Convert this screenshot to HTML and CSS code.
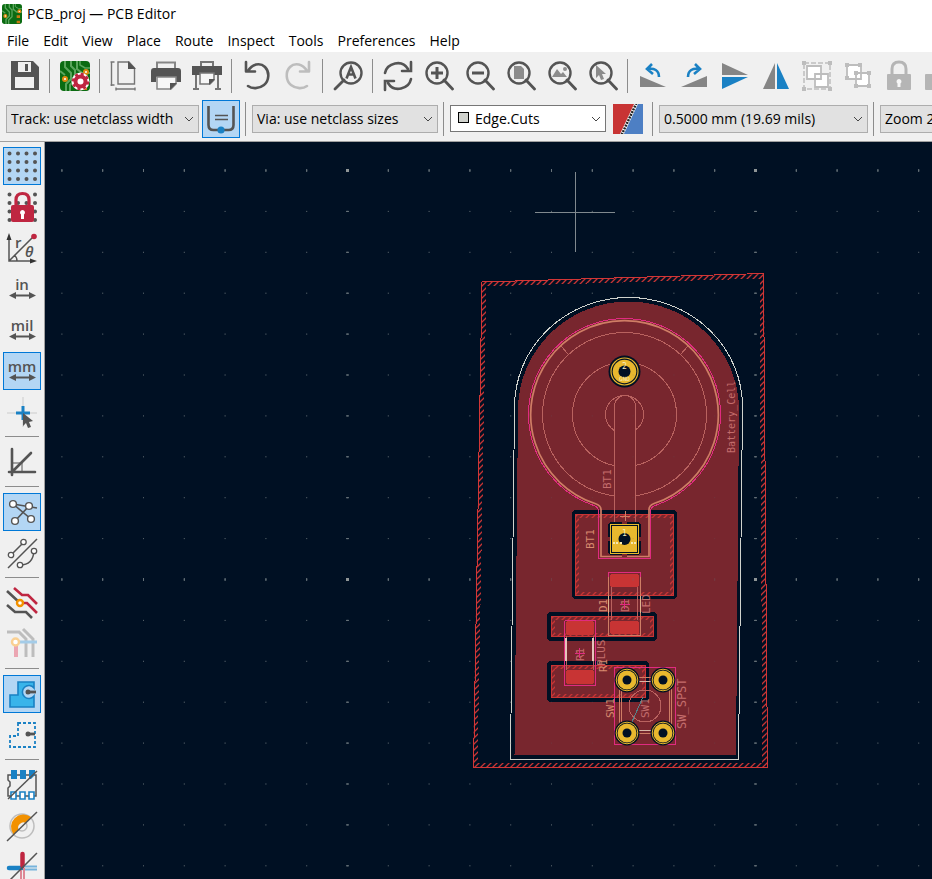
FILE: index.html
```html
<!DOCTYPE html>
<html lang="en">
<head>
<meta charset="utf-8">
<meta name="viewport" content="width=device-width, initial-scale=1">
<title>PCB_proj — PCB Editor</title>
<link rel="stylesheet" href="styles.css">
</head>
<body>
<svg class="defs" aria-hidden="true">
  <symbol id="board" viewBox="0 0 30 30">
    <rect x="0" y="0" width="30" height="30" rx="4" fill="#0b6b12"/>
    <path d="M5 0v6l6 6v6l-5 5v7M11 0v5l4 4v10l-5 5v6M17 0v8l5 4h8M0 10l5 4" fill="none" stroke="#5aa55c" stroke-width="2"/>
    <path d="M20 0v4l5 3h5" fill="none" stroke="#5aa55c" stroke-width="1.500"/>
    <g fill="#fff" stroke="#e08a10" stroke-width="2"><circle cx="5" cy="18" r="2"/><circle cx="26" cy="11" r="2"/></g>
    <path d="M22 17h5v4h-5zM22 25h5v4h-5z" fill="#c77a10"/>
  </symbol>
  <symbol id="lens" viewBox="0 0 30 30">
    <circle cx="13" cy="12" r="10.500" fill="none" stroke="#545454" stroke-width="2.400"/>
    <path d="M20 19l8.500 9" stroke="#545454" stroke-width="2.800" stroke-linecap="round"/>
  </symbol>
  <symbol id="units" viewBox="0 0 30 30">
    <path d="M6 21.500h19" stroke="#545454" stroke-width="2"/>
    <path d="M2 21.500l7-3.500v7zM29 21.500l-7-3.500v7z" fill="#545454"/>
  </symbol>
</svg>

<header class="titlebar">
  <svg class="app-icon" aria-hidden="true"><use href="#board"/></svg>
  <h1>PCB_proj — PCB Editor</h1>
</header>
<nav class="menubar" aria-label="Main menu">
  <button>File</button><button>Edit</button><button>View</button><button>Place</button><button>Route</button><button>Inspect</button><button>Tools</button><button>Preferences</button><button>Help</button>
</nav>

<div class="toolbar" role="toolbar" aria-label="Main">
  <button class="tool" aria-label="Save"><svg viewBox="0 0 30 30"><path fill="#545454" fill-rule="evenodd" d="M1 0h22l6 6v23H1zM8 1v10h13V1zM5 16v11h19V16z"/><path fill="#545454" d="M15 3h3v7h-3z"/></svg></button>
  <span class="sep"></span>
  <button class="tool" aria-label="Board setup"><svg viewBox="0 0 30 30"><use href="#board"/><circle cx="20.500" cy="20.500" r="9" fill="#fff"/><circle cx="20.500" cy="20.500" r="5" fill="none" stroke="#bf2641" stroke-width="4"/><circle cx="20.500" cy="20.500" r="7.500" fill="none" stroke="#bf2641" stroke-width="2.500" stroke-dasharray="3 2.890"/></svg></button>
  <span class="sep"></span>
  <button class="tool" aria-label="Page settings"><svg viewBox="0 0 30 30"><path d="M8 1h11l5.500 6v16H8zM1.500 1v24M.5 1h4M.5 24h4M6 28h19M6 26.500v3M25 26.500v3" fill="none" stroke="#757575" stroke-width="1.400"/><path d="M18 0l8 8h-8z" fill="#545454"/></svg></button>
  <button class="tool" aria-label="Print"><svg viewBox="0 0 30 30"><path d="M6 7V1.500h18V7" fill="none" stroke="#858585" stroke-width="2"/><path d="M0 10q0-3 3-3h24q3 0 3 3v11h-5v-5H5v5H0z" fill="#545454"/><path d="M6 16h19v7l-5 5H6z" fill="#f7f7f7" stroke="#858585" stroke-width="1.500"/><path d="M19 29v-7h7z" fill="#545454"/></svg></button>
  <button class="tool" aria-label="Plot"><svg viewBox="0 0 30 30"><path d="M9 6V1h12v5" fill="none" stroke="#757575" stroke-width="2"/><path d="M0 5h30v9h-8v-2H8v2H0z" fill="#545454"/><path d="M8 12h14v7l-4 4H8z" fill="#f7f7f7" stroke="#757575" stroke-width="1.500"/><path d="M17 24v-6h6z" fill="#545454"/><path d="M4 14v14M26 14v14M1 28h6M23 28h6" stroke="#757575" stroke-width="2"/></svg></button>
  <span class="sep"></span>
  <button class="tool" aria-label="Undo"><svg viewBox="0 0 30 30"><path d="M4 10h2C10 3 18 1 23 6s4 14-1 18-12 4-16 1M4 1v9.500h9" fill="none" stroke="#545454" stroke-width="2.600" stroke-linecap="round" stroke-linejoin="round"/></svg></button>
  <button class="tool" aria-label="Redo" disabled><svg viewBox="0 0 30 30"><path d="M26 10h-2C20 3 12 1 7 6s-4 14 1 18 12 4 16 1M26 1v9.500h-9" fill="none" stroke="#bdbdbd" stroke-width="2.600" stroke-linecap="round" stroke-linejoin="round"/></svg></button>
  <span class="sep"></span>
  <button class="tool" aria-label="Find"><svg viewBox="0 0 30 30"><circle cx="18" cy="12" r="10.500" fill="none" stroke="#545454" stroke-width="2.400"/><path d="M11 19l-9 9" stroke="#545454" stroke-width="2.800" stroke-linecap="round"/><path d="M13.500 17.500L18 6l4.500 11.500M15 13.500h6" fill="none" stroke="#545454" stroke-width="2.600"/></svg></button>
  <span class="sep"></span>
  <button class="tool" aria-label="Refresh"><svg viewBox="0 0 30 30"><path d="M2 12C4 2 19-2 25 8M28 18c-2 10-17 14-23 4M28 1v9h-9M2 29v-9h9" fill="none" stroke="#545454" stroke-width="2.600" stroke-linecap="round"/></svg></button>
  <button class="tool" aria-label="Zoom in"><svg viewBox="0 0 30 30"><use href="#lens"/><path d="M7 12h12M13 6v12" stroke="#545454" stroke-width="3"/></svg></button>
  <button class="tool" aria-label="Zoom out"><svg viewBox="0 0 30 30"><use href="#lens"/><path d="M7 12h12" stroke="#545454" stroke-width="3"/></svg></button>
  <button class="tool" aria-label="Zoom to fit"><svg viewBox="0 0 30 30"><use href="#lens"/><path d="M8 5h7l3 3v10H8z" fill="#8c8c8c"/></svg></button>
  <button class="tool" aria-label="Zoom to objects"><svg viewBox="0 0 30 30"><use href="#lens"/><path d="M5 16l5-8 4 5 2-2 4 5z" fill="#8c8c8c"/><circle cx="18" cy="8" r="2" fill="#8c8c8c"/></svg></button>
  <button class="tool" aria-label="Zoom to selection"><svg viewBox="0 0 30 30"><use href="#lens"/><path d="M8 4l10 9h-4l2 5-3 1-2-5-3 3z" fill="#8c8c8c"/></svg></button>
  <span class="sep"></span>
  <button class="tool" aria-label="Rotate counterclockwise"><svg viewBox="0 0 30 30"><path d="M2 15l26 11H2z" fill="#858585"/><path d="M21 16c0-7-5-9-11-8M14 3L9 8l6 5" fill="none" stroke="#1a81c4" stroke-width="2.600"/></svg></button>
  <button class="tool" aria-label="Rotate clockwise"><svg viewBox="0 0 30 30"><path d="M28 15L2 26h26z" fill="#858585"/><path d="M9 16c0-7 5-9 11-8M16 3l5 5-6 5" fill="none" stroke="#1a81c4" stroke-width="2.600"/></svg></button>
  <button class="tool" aria-label="Mirror vertically"><svg viewBox="0 0 30 30"><path d="M2 2l26 12H2z" fill="#858585"/><path d="M2 28l26-12H2z" fill="#1a81c4"/></svg></button>
  <button class="tool" aria-label="Mirror horizontally"><svg viewBox="0 0 30 30"><path d="M14 2v26H2z" fill="#858585"/><path d="M16 2v26h12z" fill="#1a81c4"/></svg></button>
  <button class="tool" aria-label="Group" disabled><svg viewBox="0 0 30 30"><rect x="2" y="2" width="26" height="26" fill="none" stroke="#bdbdbd" stroke-width="1.500" stroke-dasharray="5 2"/><path d="M0 0h4v4H0zM26 0h4v4h-4zM0 26h4v4H0zM26 26h4v4h-4z" fill="#bdbdbd"/><path d="M5 5h14v13H5zM13 13h13v13H13z" fill="#fff" stroke="#bdbdbd" stroke-width="1.800"/></svg></button>
  <button class="tool" aria-label="Ungroup" disabled><svg viewBox="0 0 30 30"><path d="M4 4h14v14H4zM13 12h13v13H13z" fill="#fff" stroke="#bdbdbd" stroke-width="1.800"/><path d="M2 2h4v4H2zM15 2h4v4h-4zM2 15h4v4H2zM11 10h4v4h-4zM24 10h4v4h-4zM11 23h4v4h-4zM24 23h4v4h-4z" fill="#bdbdbd"/></svg></button>
  <button class="tool" aria-label="Lock" disabled><svg viewBox="0 0 30 30"><path d="M8 14V8q0-7 7-7t7 7v6" fill="none" stroke="#b5b5b5" stroke-width="3"/><rect x="3" y="13" width="24" height="16" rx="1" fill="#b5b5b5"/><path d="M15 18a2.500 2.500 0 011.500 4.500V26h-3v-3.500A2.500 2.500 0 0115 18z" fill="#f7f7f7"/></svg></button>
  <button class="tool" aria-label="Unlock" disabled><svg viewBox="0 0 30 30"><path d="M14 14V8q0-7 7-7t7 7" fill="none" stroke="#b5b5b5" stroke-width="3"/><rect x="0" y="13" width="24" height="16" rx="1" fill="#b5b5b5"/></svg></button>
</div>

<div class="toolbar options" role="toolbar" aria-label="Options">
  <label class="combo track"><select aria-label="Track width"><option>Track: use netclass width</option></select><svg class="chevron" viewBox="0 0 10 6"><path d="M1 1l4 4 4-4"/></svg></label>
  <button class="tool on" aria-label="Use existing track width" aria-pressed="true"><svg viewBox="0 0 30 30"><path d="M2.500 2v19q0 5 5 5h15q5 0 5-5V2" fill="none" stroke="#545454" stroke-width="2.600"/><path d="M9 11.500h13M9 15.500h13" stroke="#545454" stroke-width="1.500"/><circle cx="15" cy="26" r="3.600" fill="#1a81c4"/></svg></button>
  <span class="sep"></span>
  <label class="combo via"><select aria-label="Via size"><option>Via: use netclass sizes</option></select><svg class="chevron" viewBox="0 0 10 6"><path d="M1 1l4 4 4-4"/></svg></label>
  <span class="sep"></span>
  <label class="combo layer"><span class="swatch"></span><select aria-label="Layer"><option>Edge.Cuts</option></select><svg class="chevron" viewBox="0 0 10 6"><path d="M1 1l4 4 4-4"/></svg></label>
  <button class="pair" aria-label="Layer pair"><svg viewBox="0 0 30 30"><path d="M0 0h30v30H0z" fill="#4d7fc4"/><path d="M0 0h23L9 30H0z" fill="#c83434"/><path d="M23.500-1L8.500 31" stroke="#fff" stroke-width="3.500"/><path d="M23.500-1L8.500 31" stroke="#222" stroke-width="2.500" stroke-dasharray="2 1"/></svg></button>
  <span class="sep"></span>
  <label class="combo grid"><select aria-label="Grid"><option>0.5000 mm (19.69 mils)</option></select><svg class="chevron" viewBox="0 0 10 6"><path d="M1 1l4 4 4-4"/></svg></label>
  <span class="sep"></span>
  <label class="combo zoom"><select aria-label="Zoom"><option>Zoom 2.00</option></select><svg class="chevron" viewBox="0 0 10 6"><path d="M1 1l4 4 4-4"/></svg></label>
</div>

<main class="workspace">
<div class="side" role="toolbar" aria-label="Display options">
  <button class="tool on" aria-label="Show grid" aria-pressed="true"><svg viewBox="0 0 30 30"><path d="M2.500 2.500h.01M11 2.500h.01M19.500 2.500h.01M28 2.500h.01M2.500 11h.01M11 11h.01M19.500 11h.01M28 11h.01M2.500 19.500h.01M11 19.500h.01M19.500 19.500h.01M28 19.500h.01M2.500 28h.01M11 28h.01M19.500 28h.01M28 28h.01" stroke="#545454" stroke-width="4" stroke-linecap="round"/></svg></button>
  <button class="tool" aria-label="Grid overrides"><svg viewBox="0 0 30 30"><path d="M2.500 2.500h.01M28 2.500h.01M2.500 11h.01M11 11h.01M19.500 11h.01M28 11h.01M2.500 19.500h.01M28 19.500h.01M2.500 28h.01M28 28h.01" stroke="#545454" stroke-width="4" stroke-linecap="round"/><path d="M9 15V8q0-6.500 6.500-6.500T22 8v7" fill="none" stroke="#bf2641" stroke-width="3.200"/><rect x="4" y="13" width="23" height="17" rx="2" fill="#bf2641"/><path d="M15.500 18a2.500 2.500 0 011.500 4.500V27h-3v-4.500A2.500 2.500 0 0115.500 18z" fill="#fff"/></svg></button>
  <button class="tool" aria-label="Polar coordinates"><svg viewBox="0 0 30 30"><path d="M2 4v24h24M2 28L26 4M7 22q3 2 3 6" fill="none" stroke="#545454" stroke-width="1.500"/><path d="M2 0l2.500 7h-5zM30 28l-7-2.500v5z" fill="#333"/><circle cx="27" cy="3.500" r="2.800" fill="#bf2641"/><text x="8" y="15" class="icon-text">r</text><text x="18" y="24" class="icon-text theta">θ</text></svg></button>
  <button class="tool" aria-label="Inches"><svg viewBox="0 0 30 30"><text x="15" y="16" class="icon-text mid">in</text><use href="#units"/></svg></button>
  <button class="tool" aria-label="Mils"><svg viewBox="0 0 30 30"><text x="15" y="16" class="icon-text mid">mil</text><use href="#units"/></svg></button>
  <button class="tool on" aria-label="Millimeters" aria-pressed="true"><svg viewBox="0 0 30 30"><text x="15" y="16" class="icon-text mid">mm</text><use href="#units"/></svg></button>
  <button class="tool" aria-label="Full-window crosshairs"><svg viewBox="0 0 30 30"><path d="M16 0v30M0 16h30" stroke="#ccc"/><path d="M16 9v14M9 16h14" stroke="#1a81c4" stroke-width="3"/><path d="M16 16l10 8-4 1 2 5-3 1-2-5-3 3z" fill="#545454"/></svg></button>
  <span class="sep"></span>
  <button class="tool" aria-label="45 degree mode"><svg viewBox="0 0 30 30"><path d="M5 2v26M2 25h26M5 25L24 6" stroke="#545454" stroke-width="2.600" stroke-linecap="round"/><path d="M6 16h9v9" fill="none" stroke="#545454"/></svg></button>
  <span class="sep"></span>
  <button class="tool on" aria-label="Show ratsnest" aria-pressed="true"><svg viewBox="0 0 30 30"><path d="M6 7l24 4M6 7l18 15M22 9L8 24" stroke="#545454" stroke-width="1.600"/><g fill="#fff" stroke="#545454" stroke-width="1.400"><circle cx="6" cy="7" r="3.400"/><circle cx="22" cy="9" r="3.400"/><circle cx="24" cy="22" r="3.400"/><circle cx="8" cy="24" r="3.400"/></g></svg></button>
  <button class="tool" aria-label="Curved ratsnest"><svg viewBox="0 0 30 30"><path d="M1 30L30 1M4 17L16 5M13 27q13 0 14-14" fill="none" stroke="#545454" stroke-width="1.500"/><g fill="#fff" stroke="#545454" stroke-width="1.300"><circle cx="16.500" cy="4" r="2.700"/><circle cx="4" cy="17" r="2.700"/><circle cx="27" cy="13" r="2.700"/><circle cx="13" cy="27" r="2.700"/></g></svg></button>
  <span class="sep"></span>
  <button class="tool" aria-label="Inactive layers"><svg viewBox="0 0 30 30"><path d="M0 3l13 12M0 17l8 7h11l6 6" fill="none" stroke="#545454" stroke-width="2.600"/><path d="M7 0l8 7h6l9 9M14 15h6l10 10" fill="none" stroke="#bf2641" stroke-width="2.600"/><circle cx="13" cy="15" r="3" fill="#fff" stroke="#f29100" stroke-width="2.400"/></svg></button>
  <button class="tool" aria-label="Net highlighting"><svg viewBox="0 0 30 30"><path d="M0 3h12l7 7v18M16 0l10 10v18" fill="none" stroke="#bdbdbd" stroke-width="3"/><path d="M9 14v14" stroke="#eba6b2" stroke-width="4"/><path d="M12 13h18" stroke="#a4cce8" stroke-width="3"/><circle cx="8.500" cy="13" r="3.500" fill="#fff" stroke="#fad092" stroke-width="2.400"/></svg></button>
  <span class="sep"></span>
  <button class="tool on" aria-label="Show filled zones" aria-pressed="true"><svg viewBox="0 0 30 30"><path d="M11 3h16v6a6.500 6.500 0 100 8v11H3V16h8z" fill="#39b4ea" stroke="#1a81c4" stroke-width="1.600"/><path d="M20 13h9" stroke="#545454" stroke-width="2.800"/><circle cx="21" cy="13" r="2.500" fill="#545454"/></svg></button>
  <button class="tool" aria-label="Show zone outlines"><svg viewBox="0 0 30 30"><path d="M11 3h17v24H3V16h8z" fill="none" stroke="#1a81c4" stroke-width="1.800" stroke-dasharray="3 2"/><path d="M20 14h8" stroke="#545454" stroke-width="2.800"/><circle cx="21" cy="14" r="2.500" fill="#545454"/></svg></button>
  <span class="sep"></span>
  <button class="tool" aria-label="Sketch footprints"><svg viewBox="0 0 30 30"><path d="M1 5h28v21H1v-8l2-2v-4l-2-2z" fill="none" stroke="#545454" stroke-width="1.500"/><path d="M4 0h6v9H4zM13 0h6v9h-6zM22 0h6v5l-4 4h-2z" fill="#1a81c4"/><path d="M4 22h5v7H4zM13 22h5v7h-5zM22 22h5v7h-5z" fill="#fff" stroke="#1a81c4" stroke-width="1.600"/><path d="M1 29L30 1" stroke="#545454" stroke-width="1.500"/></svg></button>
  <button class="tool" aria-label="Sketch vias"><svg viewBox="0 0 30 30"><circle cx="15" cy="15" r="12" fill="none" stroke="#bdbdbd" stroke-width="1.500"/><circle cx="15" cy="15" r="5" fill="none" stroke="#bdbdbd" stroke-width="1.500"/><path d="M6.500 23.500A12.500 12.500 0 0124 6l-5 6a5.500 5.500 0 00-7.500 7z" fill="#f29100"/><path d="M0 30L30 1" stroke="#545454" stroke-width="1.500"/></svg></button>
  <button class="tool" aria-label="Sketch tracks"><svg viewBox="0 0 30 30"><path d="M2 16h13" stroke="#1a81c4" stroke-width="4.500" stroke-linecap="round"/><path d="M15.500 2v12" stroke="#bf2641" stroke-width="4.500" stroke-linecap="round"/><path d="M14 18v12M17 16v14" stroke="#dd8795" stroke-width="2"/><path d="M18 14.500h12M18 17.500h12" stroke="#76b3dc" stroke-width="2"/><path d="M1 30L30 1" stroke="#545454" stroke-width="1.500"/></svg></button>
</div>

<svg class="board" viewBox="45 142 887 737" preserveAspectRatio="xMinYMin slice" role="img" aria-label="Board layout">
  <defs>
    <pattern id="dots" x="347" y="170" width="40.800" height="40.900" patternUnits="userSpaceOnUse"><rect width="1" height="1" fill="#5b666d"/></pattern>
    <pattern id="rows" x="347" y="169" width="40.800" height="409" patternUnits="userSpaceOnUse"><rect width="1" height="3" fill="#68737a"/></pattern>
    <pattern id="cols" x="346" y="170" width="408" height="40.900" patternUnits="userSpaceOnUse"><rect width="3" height="1" fill="#68737a"/></pattern>
    <pattern id="major" x="346" y="169" width="408" height="409" patternUnits="userSpaceOnUse"><rect width="3" height="3" fill="#8f9596"/></pattern>
    <pattern id="hatch" width="6" height="6" patternUnits="userSpaceOnUse"><path d="M-1 7L7-1M-1 1l2-2M5 7l2-2" stroke="#c83434" stroke-width="1.300" shape-rendering="geometricPrecision"/></pattern>
    <clipPath id="rim"><path d="M482 282l282-8 3 493H473z"/></clipPath>
    <clipPath id="z1"><path d="M575 514h99v82h-99z"/></clipPath>
    <clipPath id="z2"><path d="M551 616h103v21H551z"/></clipPath>
    <clipPath id="z3"><path d="M551 665h95v33h-95z"/></clipPath>
    <g id="via" class="smooth">
      <circle r="12.500" fill="#001023"/><circle r="10.800" fill="none" stroke="#e8b82e"/><circle r="9.500" fill="#e8b82e"/><circle r="4.500" fill="#001023"/>
    </g>
  </defs>
  <rect x="45" y="142" width="2000" height="2000" fill="#001023"/>
  <g id="grid"><rect x="45" y="142" width="2000" height="2000" fill="url(#dots)"/><rect x="45" y="142" width="2000" height="2000" fill="url(#rows)"/><rect x="45" y="142" width="2000" height="2000" fill="url(#cols)"/><rect x="45" y="142" width="2000" height="2000" fill="url(#major)"/></g>

  <path d="M482 282l282-8 3 493H473z" fill="none" stroke="url(#hatch)" stroke-width="9" clip-path="url(#rim)"/>
  <path d="M482 282l281.500-8.500 4 493.500H473.500z" fill="none" stroke="#d23636"/>
  <path d="M514.500 755l3.500-345a110.500 108.500 0 01221 0l-3 345z" fill="#78262e"/>
  <path d="M510.500 759.500l4-352.500a114 109.500 0 01228 0l-4 352.500z" fill="none" stroke="#d0d2cd"/>

  <g fill="none" stroke="#b9625f">
    <circle cx="624.500" cy="414.500" r="82"/><circle cx="624.500" cy="414.500" r="52"/><circle cx="624.500" cy="414.500" r="19"/>
    <path d="M561 346l7 8M688 346l-7 8"/>
    <path d="M614.500 527V406a10.500 10.500 0 0121 0v121" fill="#78262e"/>
  </g>

  <rect x="572" y="510" width="105" height="89" rx="4" fill="#001023"/>
  <rect x="547" y="612" width="110" height="29" rx="4" fill="#001023"/>
  <rect x="547" y="661" width="102" height="41" rx="4" fill="#001023"/>
  <g fill="#78262e" stroke="#c83434">
    <path d="M575.500 514.500h98v81h-98zM551.500 616.500h102v20h-102zM551.500 665.500h94v32h-94z"/>
  </g>
  <g fill="none" stroke="url(#hatch)" stroke-width="8">
    <path d="M575 514h99v82h-99z" clip-path="url(#z1)"/><path d="M551 616h103v21H551z" clip-path="url(#z2)"/><path d="M551 665h95v33h-95z" clip-path="url(#z3)"/>
  </g>
  <path d="M614.500 507v20M635.500 507v20" stroke="#b9625f"/>

  <path d="M592.500 505A96 96 0 11656.500 505q-6 2-6 6v47.500h-52V511q0-4-6-6z" fill="none" stroke="#e02b80"/>
  <path class="smooth" d="M595 503.500A93.800 93.800 0 11654 503.500q-5 2-5 6v47h-48v-47q0-4-6-6z" fill="none" stroke="#cf7d65" stroke-width="1.700"/>

  <g class="smooth">
    <circle cx="624.500" cy="371.500" r="16" fill="#001023"/>
    <path d="M613 358l-3-3M636 358l3-3M613 385l-3 3M636 385l3 3" stroke="#78262e" stroke-width="3"/>
    <circle cx="624.500" cy="371.500" r="13.500" fill="none" stroke="#e8b82e" stroke-width="1.200"/>
    <circle cx="624.500" cy="371.500" r="11.800" fill="#e8b82e"/><circle cx="624.500" cy="371.500" r="6" fill="#001023"/>
  </g>
  <text x="624.500" y="369" class="pad">2</text><text x="624.500" y="381" class="pad small">GND</text>

  <rect x="608" y="522" width="33" height="33" rx="4" fill="#001023"/>
  <path d="M622 520h5v4h-5zM622 553h5v4h-5zM606 537h4v4h-4zM639 537h4v4h-4z" fill="#78262e"/>
  <rect x="610.500" y="524.500" width="28" height="29" fill="#001023" stroke="#e8b82e"/><rect x="612" y="526" width="25" height="26" fill="#e8b82e"/>
  <circle class="smooth" cx="624.500" cy="539" r="6" fill="#001023"/><text x="624.500" y="536" class="pad">1</text>
  <path d="M613 542.500h5M620 542.500h3M631 542.500h5" stroke="#f5e8b0" stroke-width="2" stroke-dasharray="2 1"/>
  <path d="M620 516.500h10M625.500 511v10" stroke="#cf7d65"/>

  <g fill="none">
    <path d="M611.500 587v33M637.500 587v33" stroke="#b9625f"/>
    <path d="M608.500 573v62h32v-62" stroke="#cf7d65"/>
    <path d="M608.500 577v-4.500h32v4.500" stroke="#e02b80"/>
    <path d="M608.500 596v17M640.500 596v17" stroke="#e0b48c"/>
  </g>
  <g fill="#c83434"><rect x="610" y="574" width="29" height="13" rx="3"/><rect x="610" y="621" width="29" height="13" rx="3"/><rect x="566" y="621" width="28" height="14" rx="3"/><rect x="566" y="670" width="28" height="14" rx="3"/></g>
  <g fill="none" stroke="#b9625f"><path d="M566.500 636v34M593.500 636v34"/></g>
  <path d="M564.500 636v49.500h31v-49.500M564.500 620.500h31v16M564.500 620.500v16" fill="none" stroke="#e02b80"/>
  <path d="M566 638v23M593 638v23" stroke="#e6c4ba" stroke-width="2"/>

  <g fill="none">
    <path d="M619.500 677.500h52v56h-52zM621.500 681.500h48v49h-48z" stroke="#cf7d65"/>
    <path d="M636 681.500h17M636 730.500h17" stroke="#d9b7a6"/>
    <circle cx="645" cy="706" r="16" stroke="#b9625f"/>
    <path d="M643 697l-16 36" stroke="#54828a"/>
    <path d="M614.500 667.500h61v77h-61z" stroke="#e02b80"/>
  </g>
  <use href="#via" x="627" y="680"/><use href="#via" x="663" y="680"/><use href="#via" x="627" y="733"/><use href="#via" x="663" y="733"/>

  <g class="silk">
    <text transform="translate(735 453) rotate(-90)" class="narrow">Battery_Cell</text>
    <text transform="translate(611 489) rotate(-90)">BT1</text>
    <text transform="translate(594 549) rotate(-90)" class="warm">BT1</text>
    <text transform="translate(607 612) rotate(-90)" class="warm">D1</text>
    <text transform="translate(629 612) rotate(-90)">D1</text>
    <text transform="translate(650 614) rotate(-90)">LED</text>
    <text transform="translate(584 661) rotate(-90)">R1</text>
    <text transform="translate(605 666) rotate(-90)">PLUS</text>
    <text transform="translate(607 672) rotate(-90)" class="warm">R1</text>
    <text transform="translate(614 718) rotate(-90)" class="warm">SW1</text>
    <text transform="translate(649 718) rotate(-90)">SW1</text>
    <text transform="translate(686 729) rotate(-90)" class="wide">SW_SPST</text>
  </g>
  <path d="M620 604.500h10M624.500 599v10M575 653.500h10M579.500 648v10" stroke="#e02b80"/>
  <use href="#grid" opacity="0.250"/>
  <path d="M535 212.500h80M575.500 172v80" stroke="#80898e"/>
</svg>
</main>
</body>
</html>
```
FILE: styles.css
```css
* { box-sizing: border-box; }

body {
  margin: 0;
  height: 100vh;
  display: flex;
  flex-direction: column;
  overflow: hidden;
  background: #fff;
  color: #000;
  font: 14px/20px "Open Sans", "Noto Sans", sans-serif;
}

button, select { font: inherit; color: inherit; border: 0; padding: 0; background: none; }

.defs { position: absolute; width: 0; height: 0; }

.titlebar { display: flex; align-items: center; gap: 5px; height: 27px; padding: 0 2px; flex: none; }
.titlebar h1 { margin: 0; font-size: 14px; font-weight: 400; }
.app-icon { width: 20px; height: 20px; }

.menubar { display: flex; height: 25px; padding-top: 2px; flex: none; }
.menubar button { padding: 0 7px; }

.toolbar {
  display: flex;
  align-items: center;
  gap: 3px;
  height: 48px;
  padding: 0 6px;
  flex: none;
  overflow: hidden;
  background: #f0f0f0;
}
.options { height: 42px; padding-bottom: 4px; border-bottom: 1px solid #a0a0a0; }

.tool {
  flex: none;
  display: grid;
  place-items: center;
  width: 38px;
  height: 38px;
  border: 1px solid transparent;
}
.tool svg { width: 30px; height: 30px; overflow: visible; }
.tool.on { background: #b3d6f4; border-color: #0078d7; }

.sep { flex: none; width: 1px; height: 34px; margin: 0 3px 0 2px; background: #8c8c8c; }

.combo { position: relative; flex: none; height: 28px; }
.combo select {
  appearance: none;
  width: 100%;
  height: 100%;
  padding: 1px 24px 0 4px;
  border: 1px solid #adadad;
  border-radius: 0;
  background: #e1e1e1;
}
.chevron {
  position: absolute;
  right: 5px;
  top: 11px;
  width: 10px;
  height: 6px;
  fill: none;
  stroke: #444;
  pointer-events: none;
}
.track { width: 193px; }
.via { width: 186px; }
.layer { width: 156px; height: 27px; margin-right: 4px; }
.combo.layer select { background: #fff; border-color: #767676; padding-left: 24px; }
.grid { width: 209px; }
.zoom { width: 180px; }
.swatch {
  position: absolute;
  left: 8px;
  top: 7px;
  width: 11px;
  height: 11px;
  border: 1px solid #000;
  background: #d0d2cd;
}
.pair { flex: none; width: 30px; height: 30px; margin-right: 4px; }
.pair svg { display: block; width: 30px; height: 30px; }

.workspace { display: flex; flex: 1; min-height: 0; }
.side {
  flex: none;
  display: flex;
  flex-direction: column;
  gap: 3px;
  width: 45px;
  padding: 5px 3px 0;
  overflow: hidden;
  border-right: 1px solid #a0a0a0;
  background: #f0f0f0;
}
.side .sep { width: 34px; height: 1px; margin: 2px 2px 3px; }

.board { flex: 1; min-width: 0; height: 100%; background: #001023; shape-rendering: crispEdges; }
.smooth { shape-rendering: geometricPrecision; }

.icon-text { font: 600 15px "Open Sans", sans-serif; fill: #545454; }
.mid { text-anchor: middle; }
.theta { font-style: italic; }

.silk { font: 11px "DejaVu Sans Mono", monospace; fill: #c46d6c; }
.silk .narrow { font-size: 10px; }
.silk .wide { font-size: 12px; }
.silk .warm { fill: #d98a6e; }
.pad { font: 8px "DejaVu Sans Mono", monospace; fill: #f7ebb8; text-anchor: middle; }
.pad.small { font-size: 6px; }
```
